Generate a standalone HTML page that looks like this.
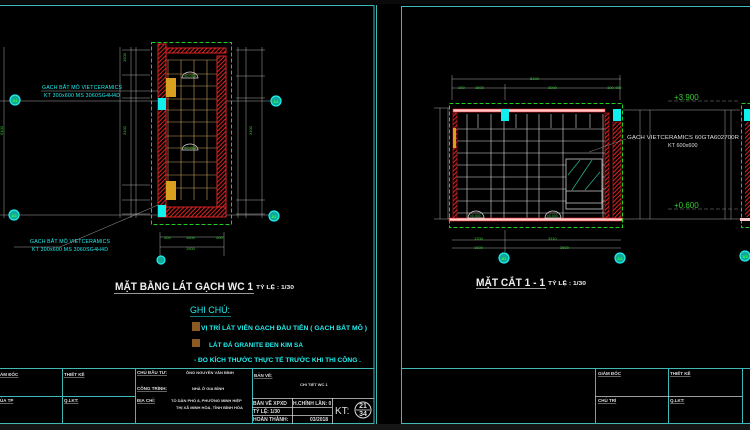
<!DOCTYPE html>
<html><head><meta charset="utf-8"><style>
html,body{margin:0;padding:0;background:#000;width:750px;height:430px;overflow:hidden}
svg{display:block}
text{font-family:"Liberation Sans","Noto Sans CJK SC",sans-serif}
</style></head><body>
<svg width="750" height="430" viewBox="0 0 750 430" xmlns="http://www.w3.org/2000/svg">
<defs><pattern id="hatch" width="3" height="3" patternUnits="userSpaceOnUse" patternTransform="rotate(45)"><rect width="3" height="3" fill="#000"/><rect width="1" height="3" fill="#d22"/></pattern></defs>
<rect width="750" height="430" fill="#000"/>
<rect x="0" y="424" width="750" height="6" fill="#161616"/>
<rect x="0" y="0" width="750" height="4" fill="#0a0a0a"/>
<g stroke="#3fb8b8" fill="none" stroke-width="1">
<path d="M0 5.5H374V423.5H0"/>
<path d="M0 368.5H374"/>
<path d="M62.5 368V424M135.5 368V424M252.5 368V424"/>
<path d="M0 396.5H135"/>
</g>
<g stroke="#cfcfcf" fill="none" stroke-width="0.8">
<path d="M252 398.5H374M252 407.5H332M252 415.5H332M292.5 398V424M332.5 398V424"/>
</g>
<g stroke="#3fb8b8" fill="none" stroke-width="1">
<path d="M376.5 5V424"/>
<path d="M401.5 6V423.5H750M401 6.5H750"/>
<path d="M401 368.5H750"/>
<path d="M595.5 368V424M668.5 368V424M742.5 368V424"/>
</g>
<path d="M595 396.5H742" stroke="#cfcfcf" stroke-width="0.8"/>
<g fill="#ddd" font-size="4.5" font-weight="bold" text-decoration="underline">
<text x="0" y="376">ÁM ĐỐC</text><text x="64" y="376">THIẾT KẾ</text>
<text x="137" y="374">CHỦ ĐẦU TƯ:</text><text x="137" y="390">CÔNG TRÌNH:</text>
<text x="137" y="402">ĐỊA CHỈ:</text><text x="254" y="377">BẢN VẼ:</text>
<text x="0" y="402">ỦA TP</text><text x="64" y="402">Q.LKT:</text>
<text x="598" y="375">GIÁM ĐỐC</text><text x="670" y="375">THIẾT KẾ</text>
<text x="598" y="402">CHỦ TRÌ</text><text x="670" y="402">Q.LKT:</text>
</g>
<g fill="#ddd" font-size="4" font-weight="bold">
<text x="186" y="374">ÔNG NGUYỄN VĂN BÌNH</text>
<text x="192" y="390">NHÀ Ở GIA ĐÌNH</text>
<text x="171" y="402">TỔ DÂN PHỐ 8, PHƯỜNG MINH HIỆP</text>
<text x="176" y="409">THỊ XÃ MINH HÒA, TỈNH BÌNH HÒA</text>
<text x="300" y="386">CHI TIẾT WC 1</text>
<text x="253" y="405" font-size="5">BẢN VẼ XPXD</text><text x="293" y="405" font-size="5">H.CHÍNH LẦN: 0</text>
<text x="253" y="413" font-size="5">TỶ LỆ: 1/30</text>
<text x="253" y="421" font-size="5">HOÀN THÀNH:</text><text x="310" y="421" font-size="5">03/2018</text>
</g>
<text x="335" y="414" fill="#ddd" font-size="10">KT:</text>
<circle cx="363" cy="410" r="8" fill="none" stroke="#ddd" stroke-width="1"/>
<path d="M356 410H370" stroke="#ddd" stroke-width="0.8"/>
<text x="363" y="408" fill="#ddd" font-size="7" font-weight="bold" text-anchor="middle">21</text>
<text x="363" y="416" fill="#ddd" font-size="7" font-weight="bold" text-anchor="middle">34</text>

<g stroke="#aaa" stroke-width="0.5" fill="none">
<path d="M4 47V218M120 47V218M131 47V218M136 47V218M238 47V218M246 47V218M262 47V218"/>
<path d="M0 101H160M226 101H276M0 215H160M226 215H276"/>
<path d="M122 50H150M122 75H150M122 98H150M122 185H150M122 200H150M122 214H150"/>
<path d="M236 50H265M236 76H265M236 98H265M236 200H265M236 214H265"/>
<path d="M160 232V256M224 232V256M160 237H224M160 247H224"/>
</g>
<g fill="#3c3" font-size="4">
<text x="164" y="239">200</text><text x="186" y="239">1500</text><text x="216" y="239">200</text>
<text x="186" y="250">1900</text>
</g>
<g stroke="#c8a060" stroke-width="0.6">
<path d="M168 60V200M181 60V200M194 60V200M207 60V200"/>
<path d="M166 60H217M166 74H217M166 86H217M166 99H217M166 110H217M166 122H217M166 136H217M166 148H217M166 162H217M166 175H217M166 188H217"/>
</g>
<rect x="158" y="44" width="8" height="173" fill="url(#hatch)" stroke="#d22" stroke-width="1"/>
<rect x="217" y="56" width="9" height="161" fill="url(#hatch)" stroke="#d22" stroke-width="1"/>
<rect x="166" y="48" width="60" height="5" fill="url(#hatch)" stroke="#d22" stroke-width="1"/>
<rect x="166" y="207" width="60" height="10" fill="url(#hatch)" stroke="#d22" stroke-width="1"/>
<rect x="151.5" y="42.5" width="80" height="182" fill="none" stroke="#2c2" stroke-width="1" stroke-dasharray="4 2"/>
<rect x="166" y="78" width="10" height="19" fill="#d9a020"/>
<rect x="166" y="181" width="10" height="19" fill="#d9a020"/>
<rect x="158" y="98" width="8" height="12" fill="#1ee"/>
<rect x="158" y="205" width="8" height="12" fill="#1ee"/>
<path d="M182 78a8 6 0 0 1 16 0z M182 150a8 6 0 0 1 16 0z" fill="none" stroke="#ddd" stroke-width="0.7"/>
<g fill="#3c3" font-size="4"><text x="184" y="77">±0.000</text><text x="184" y="149">±0.000</text></g>
<path d="M41 91H158M14 247L60 247L158 205" stroke="#ccc" stroke-width="0.4" fill="none"/>
<g fill="#2ee" font-size="5.2">
<text x="42" y="89" textLength="80">GẠCH BẤT MÔ VIETCERAMICS</text>
<text x="44" y="97" textLength="76">KT 300x600 MS 3060SG4H4D</text>
<text x="30" y="243" textLength="80">GẠCH BẤT MÔ VIETCERAMICS</text>
<text x="32" y="251" textLength="76">KT 300x600 MS 3060SG4H4D</text>
</g>
<g fill="#3c3" font-size="4">
<text x="126" y="62" transform="rotate(-90 126 62)">1500</text>
<text x="126" y="135" transform="rotate(-90 126 135)">3100</text>
<text x="252" y="135" transform="rotate(-90 252 135)">3100</text>
<text x="3" y="135" transform="rotate(-90 3 135)">5100</text>
</g>
<g fill="#1a9" stroke="#2ee" stroke-width="1.2">
<circle cx="15" cy="100" r="5"/><circle cx="276" cy="101" r="5"/>
<circle cx="14" cy="215" r="5"/><circle cx="274" cy="216" r="5"/>
<circle cx="161" cy="260" r="4"/>
<circle cx="504" cy="258" r="5"/><circle cx="620" cy="258" r="5"/><circle cx="745" cy="256" r="5"/>
</g>
<g fill="#3f3" font-size="4" font-weight="bold" text-anchor="middle">
<text x="15" y="102">A1</text><text x="276" y="103">A1</text><text x="14" y="217">A2</text><text x="274" y="218">A2</text>
<text x="504" y="260">A1</text><text x="620" y="260">A2</text><text x="745" y="258">A3</text>
</g>
<text x="115" y="290" fill="#eee" font-size="11" font-weight="bold" textLength="138" lengthAdjust="spacingAndGlyphs">MẶT BẰNG LÁT GẠCH WC 1</text>
<path d="M114 293.5H254" stroke="#ccc" stroke-width="0.8"/>
<text x="256" y="289" fill="#eee" font-size="5.5" font-weight="bold" textLength="38" lengthAdjust="spacingAndGlyphs">TỶ LỆ : 1/30</text>
<text x="190" y="313" fill="#2ee" font-size="9" textLength="40" lengthAdjust="spacingAndGlyphs">GHI CHÚ:</text>
<path d="M190 316.5H231" stroke="#2ee" stroke-width="0.6"/>
<rect x="192" y="322" width="8" height="9" fill="#8a5a20"/>
<rect x="192" y="339" width="8" height="8" fill="#8a5a20"/>
<g fill="#2ee" font-size="6.3" font-weight="bold">
<text x="201" y="330" textLength="166" lengthAdjust="spacingAndGlyphs">VỊ TRÍ LÁT VIÊN GẠCH ĐẦU TIÊN ( GẠCH BẤT MÔ )</text>
<text x="209" y="347" textLength="94" lengthAdjust="spacingAndGlyphs">LÁT ĐÁ GRANITE ĐEN KIM SA</text>
<text x="194" y="362" textLength="167" lengthAdjust="spacingAndGlyphs">- ĐO KÍCH THƯỚC THỰC TẾ  TRƯỚC KHI THI CÔNG .</text>
</g>

<g stroke="#aaa" stroke-width="0.5" fill="none">
<path d="M452 79H621M452 88H621M452 75V100M505 84V100M620 75V100"/>
<path d="M434 108H450M434 219H450M440 108V219M448 108V219"/>
<path d="M623 110H740M623 219H740M640 110V219M650 110V219M725 110V219M731 110V219"/>
<path d="M452 240H621M452 248H621M505 230V252"/>
</g>
<g fill="#3c3" font-size="4">
<text x="530" y="80">5100</text><text x="475" y="89">1500</text><text x="548" y="89">3000</text><text x="458" y="89">100</text><text x="607" y="89">100 400</text>
<text x="474" y="240">1200</text><text x="548" y="240">3110</text><text x="474" y="249">1600</text><text x="560" y="249">3500</text>
</g>
<text x="674" y="100" fill="#3c3" font-size="8">+3.900</text>
<text x="674" y="208" fill="#3c3" font-size="8">+0.600</text>
<path d="M668 101H740M668 209H740" stroke="#888" stroke-width="0.5" stroke-dasharray="4 2"/>
<g stroke="#ddd" stroke-width="0.6">
<path d="M456 114V219M467 114V219M478 114V128M491 114V219M504 114V219M516 114V128M527 114V219M539 114V219M551 114V128M563 114V219M576 114V128M590 114V128M603 114V219"/>
<path d="M453 129H605M453 141H605M453 153H605M453 165H605M453 177H605M453 189H605M453 201H605M453 213H605"/>
</g>
<rect x="566" y="159" width="36" height="50" fill="#000" stroke="#ccc" stroke-width="0.8"/>
<path d="M568 175L580 160M572 190L592 160M585 190L600 172" stroke="#2a8" stroke-width="0.8"/>
<path d="M566 191H602V203H566z" fill="none" stroke="#ccc" stroke-width="0.8"/>
<rect x="453" y="109" width="152" height="3" fill="#fcc" stroke="#e22" stroke-width="0.6"/>
<rect x="449" y="218" width="174" height="3" fill="#fcc" stroke="#e22" stroke-width="0.6"/>
<rect x="453" y="113" width="4" height="105" fill="url(#hatch)" stroke="#d22" stroke-width="0.6"/>
<rect x="605" y="113" width="4" height="105" fill="url(#hatch)" stroke="#d22" stroke-width="0.6"/>
<rect x="613" y="122" width="8" height="96" fill="url(#hatch)" stroke="#d22" stroke-width="0.6"/>
<rect x="453" y="128" width="3" height="20" fill="#d9a020"/>
<rect x="449.5" y="103.5" width="173" height="124" fill="none" stroke="#2c2" stroke-width="1" stroke-dasharray="4 2"/>
<rect x="501" y="109" width="8" height="12" fill="#1ee"/>
<rect x="613" y="109" width="8" height="12" fill="#1ee"/>
<path d="M468 218a8 7 0 0 1 16 0zM545 218a8 7 0 0 1 16 0z" fill="none" stroke="#ddd" stroke-width="0.7"/>
<g fill="#3c3" font-size="3.5"><text x="470" y="217">±0.000</text><text x="547" y="217">±0.000</text></g>
<path d="M589 152L626 139" stroke="#aaa" stroke-width="0.4"/>
<text x="627" y="139" fill="#ddd" font-size="5.5" textLength="112" lengthAdjust="spacingAndGlyphs">GẠCH VIETCERAMICS 60GTA602700R</text>
<text x="668" y="147" fill="#ddd" font-size="5.5">KT 600x600</text>
<rect x="741.5" y="103.5" width="20" height="124" fill="none" stroke="#2c2" stroke-width="1" stroke-dasharray="4 2"/>
<rect x="744" y="109" width="8" height="12" fill="#1ee"/>
<rect x="745" y="122" width="6" height="95" fill="url(#hatch)"/>
<rect x="740" y="218" width="10" height="3" fill="#fcc"/>
<text x="476" y="286" fill="#eee" font-size="11" font-weight="bold" textLength="69" lengthAdjust="spacingAndGlyphs">MẶT CẮT 1 - 1</text>
<path d="M476 288.5H546" stroke="#ccc" stroke-width="0.8"/>
<text x="548" y="285" fill="#eee" font-size="5.5" font-weight="bold" textLength="38" lengthAdjust="spacingAndGlyphs">TỶ LỆ : 1/30</text>
</svg>
</body></html>
